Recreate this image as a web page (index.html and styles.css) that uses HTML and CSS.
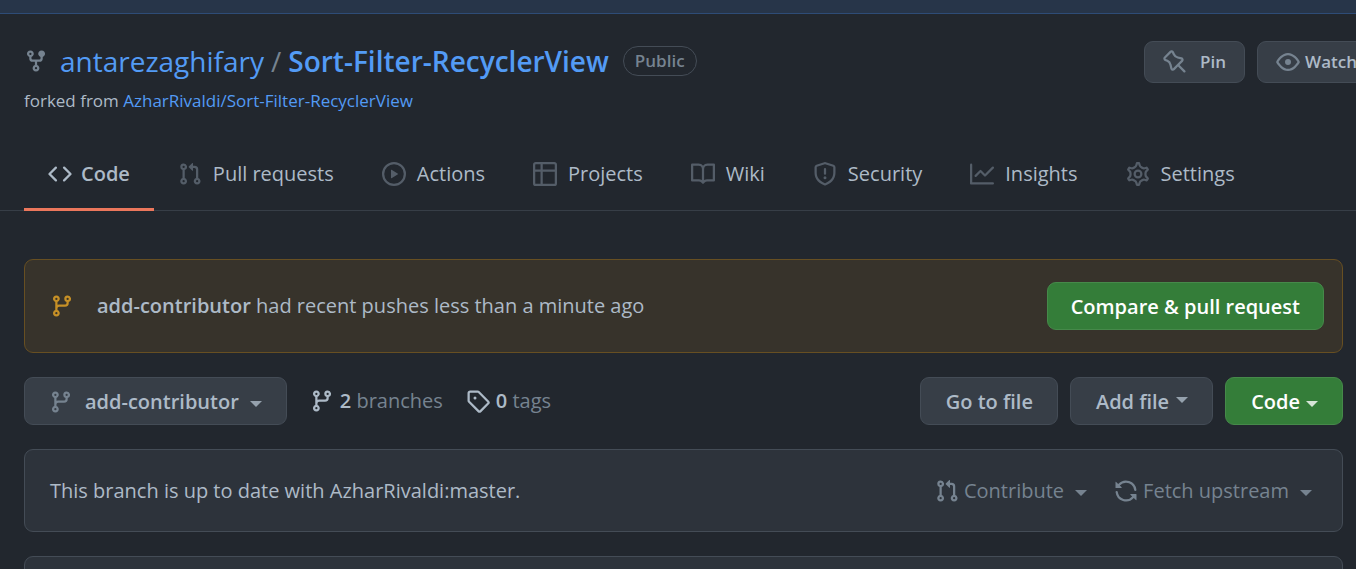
FILE: index.html
```
<!DOCTYPE html>
<html lang="en">
<head>
<meta charset="utf-8">
<title>antarezaghifary/Sort-Filter-RecyclerView</title>
<link rel="stylesheet" href="styles.css">
</head>
<body>
<svg class="sprite" aria-hidden="true">
  <symbol id="fork" viewBox="0 0 16 16"><path d="M5 3.25a.75.75 0 11-1.5 0 .75.75 0 011.5 0zm0 2.122a2.25 2.25 0 10-1.5 0v.878A2.25 2.25 0 005.75 8.5h1.5v2.128a2.251 2.251 0 101.5 0V8.5h1.5a2.25 2.25 0 002.25-2.25v-.878a2.25 2.25 0 10-1.5 0v.878a.75.75 0 01-.75.75h-4.5A.75.75 0 015 6.25v-.878zm3.75 7.378a.75.75 0 11-1.5 0 .75.75 0 011.5 0zm3-8.75a.75.75 0 100-1.5.75.75 0 000 1.5z"/></symbol>
  <symbol id="pin" viewBox="0 0 16 16"><path d="M4.456.734a1.75 1.75 0 012.826.504l.613 1.327a3.081 3.081 0 002.084 1.707l2.454.584c1.332.317 1.8 1.972.832 2.94L11.06 10l3.72 3.72a.75.75 0 11-1.061 1.06L10 11.06l-2.204 2.205c-.968.968-2.623.5-2.94-.832l-.584-2.454a3.081 3.081 0 00-1.707-2.084l-1.327-.613a1.75 1.75 0 01-.504-2.826L4.456.734zM5.92 1.866a.25.25 0 00-.404-.072L1.794 5.516a.25.25 0 00.072.404l1.328.613A4.582 4.582 0 015.73 9.63l.584 2.454a.25.25 0 00.42.12l5.47-5.47a.25.25 0 00-.12-.42L9.63 5.73a4.581 4.581 0 01-3.098-2.537L5.92 1.866z"/></symbol>
  <symbol id="eye" viewBox="0 0 16 16"><path d="M1.679 7.932c.412-.621 1.242-1.75 2.366-2.717C5.175 4.242 6.527 3.5 8 3.5c1.473 0 2.824.742 3.955 1.715 1.124.967 1.954 2.096 2.366 2.717a.119.119 0 010 .136c-.412.621-1.242 1.75-2.366 2.717C10.825 11.758 9.473 12.5 8 12.5c-1.473 0-2.824-.742-3.955-1.715C2.92 9.818 2.09 8.69 1.679 8.068a.119.119 0 010-.136zM8 2c-1.981 0-3.67.992-4.933 2.078C1.797 5.169.88 6.423.43 7.1a1.619 1.619 0 000 1.798c.45.678 1.367 1.932 2.637 3.024C4.329 13.008 6.019 14 8 14c1.981 0 3.67-.992 4.933-2.078 1.27-1.091 2.187-2.345 2.637-3.023a1.619 1.619 0 000-1.798c-.45-.678-1.367-1.932-2.637-3.023C11.671 2.992 9.981 2 8 2zm0 8a2 2 0 100-4 2 2 0 000 4z"/></symbol>
  <symbol id="code" viewBox="0 0 16 16"><path d="M4.72 3.22a.75.75 0 011.06 1.06L2.06 8l3.72 3.72a.75.75 0 11-1.06 1.06L.47 8.53a.75.75 0 010-1.06l4.25-4.25zm6.56 0a.75.75 0 10-1.06 1.06L13.94 8l-3.72 3.72a.75.75 0 101.06 1.06l4.25-4.25a.75.75 0 000-1.06l-4.25-4.25z"/></symbol>
  <symbol id="pull" viewBox="0 0 16 16"><path d="M7.177 3.073L9.573.677A.25.25 0 0110 .854v4.792a.25.25 0 01-.427.177L7.177 3.427a.25.25 0 010-.354zM3.75 2.5a.75.75 0 100 1.5.75.75 0 000-1.5zm-2.25.75a2.25 2.25 0 113 2.122v5.256a2.251 2.251 0 11-1.5 0V5.372A2.25 2.25 0 011.5 3.25zM11 2.5h-1V4h1a1 1 0 011 1v5.628a2.251 2.251 0 101.5 0V5A2.5 2.5 0 0011 2.5zm1 10.25a.75.75 0 111.5 0 .75.75 0 01-1.5 0zM3.75 12a.75.75 0 100 1.5.75.75 0 000-1.5z"/></symbol>
  <symbol id="play" viewBox="0 0 16 16"><path d="M1.5 8a6.5 6.5 0 1113 0 6.5 6.5 0 01-13 0zM8 0a8 8 0 100 16A8 8 0 008 0zM6.379 5.227A.25.25 0 006 5.442v5.117a.25.25 0 00.379.214l4.264-2.559a.25.25 0 000-.428L6.379 5.227z"/></symbol>
  <symbol id="table" viewBox="0 0 16 16"><path fill-rule="evenodd" d="M0 1.75C0 .784.784 0 1.75 0h12.5C15.216 0 16 .784 16 1.75v12.5A1.75 1.75 0 0114.25 16H1.75A1.75 1.75 0 010 14.25V1.75zM1.5 6.5v7.75c0 .138.112.25.25.25H5v-8H1.5zM5 5H1.5V1.75a.25.25 0 01.25-.25H5V5zm1.5 1.5v8h7.75a.25.25 0 00.25-.25V6.5h-8zm8-1.5h-8V1.5h7.75a.25.25 0 01.25.25V5z"/></symbol>
  <symbol id="book" viewBox="0 0 16 16"><path fill-rule="evenodd" d="M0 1.75A.75.75 0 01.75 1h4.253c1.227 0 2.317.59 3 1.501A3.744 3.744 0 0111.006 1h4.245a.75.75 0 01.75.75v10.5a.75.75 0 01-.75.75h-4.507a2.25 2.25 0 00-1.591.659l-.622.621a.75.75 0 01-1.06 0l-.622-.621A2.25 2.25 0 005.258 13H.75a.75.75 0 01-.75-.75V1.75zm8.755 3a2.25 2.25 0 012.25-2.25H14.5v9h-3.757c-.71 0-1.4.201-1.992.572l.004-7.322zm-1.504 7.324l.004-5.073-.002-2.253A2.25 2.25 0 005.003 2.5H1.5v9h3.757a3.75 3.75 0 011.994.574z"/></symbol>
  <symbol id="shield" viewBox="0 0 16 16"><path fill-rule="evenodd" d="M7.467.133a1.75 1.75 0 011.066 0l5.25 1.68A1.75 1.75 0 0115 3.48V7c0 1.566-.32 3.182-1.303 4.682-.983 1.498-2.585 2.813-5.032 3.855a1.7 1.7 0 01-1.33 0c-2.447-1.042-4.049-2.357-5.032-3.855C1.32 10.182 1 8.566 1 7V3.48a1.75 1.75 0 011.217-1.667l5.25-1.68zm.61 1.429a.25.25 0 00-.153 0l-5.25 1.68a.25.25 0 00-.174.238V7c0 1.358.275 2.666 1.057 3.86.784 1.194 2.121 2.34 4.366 3.297a.2.2 0 00.154 0c2.245-.956 3.582-2.104 4.366-3.298C13.225 9.666 13.5 8.36 13.5 7V3.48a.25.25 0 00-.174-.237l-5.25-1.68zM9 10.5a1 1 0 11-2 0 1 1 0 012 0zm-.25-5.75a.75.75 0 10-1.5 0v3a.75.75 0 001.5 0v-3z"/></symbol>
  <symbol id="graph" viewBox="0 0 16 16"><path d="M1.5 1.75a.75.75 0 00-1.5 0v12.5c0 .414.336.75.75.75h14.5a.75.75 0 000-1.5H1.5V1.75zm14.28 2.53a.75.75 0 00-1.06-1.06L10 7.94 7.53 5.47a.75.75 0 00-1.06 0L3.22 8.72a.75.75 0 001.06 1.06L7 7.06l2.47 2.47a.75.75 0 001.06 0l5.25-5.25z"/></symbol>
  <symbol id="gear" viewBox="0 0 16 16"><g fill="none" stroke="currentColor"><path stroke-width="1.35" transform="translate(8 8) scale(1.11) translate(-8 -8)" d="M7.429 1.525a6.593 6.593 0 011.142 0c.036.003.108.036.137.146l.289 1.105c.147.56.55.967.997 1.189.174.086.341.183.501.29.417.278.97.423 1.53.27l1.102-.303c.11-.03.175.016.195.046.219.31.41.641.573.989.014.031.022.11-.059.19l-.815.806c-.411.406-.562.957-.53 1.456a4.588 4.588 0 010 .582c-.032.499.119 1.05.53 1.456l.815.806c.08.08.073.159.059.19a6.494 6.494 0 01-.573.99c-.02.029-.086.074-.195.045l-1.103-.303c-.559-.153-1.112-.008-1.529.27-.16.107-.327.204-.5.29-.449.222-.851.628-.998 1.189l-.289 1.105c-.029.11-.101.143-.137.146a6.613 6.613 0 01-1.142 0c-.036-.003-.108-.037-.137-.146l-.289-1.105c-.147-.56-.55-.967-.997-1.189a4.502 4.502 0 01-.501-.29c-.417-.278-.97-.423-1.53-.27l-1.102.303c-.11.03-.175-.016-.195-.046a6.492 6.492 0 01-.573-.989c-.014-.031-.022-.11.059-.19l.815-.806c.411-.406.562-.957.53-1.456a4.587 4.587 0 010-.582c.032-.499-.119-1.05-.53-1.456l-.815-.806c-.08-.08-.073-.159-.059-.19a6.44 6.44 0 01.573-.99c.02-.029.086-.075.195-.045l1.103.303c.559.153 1.112.008 1.529-.27.16-.107.327-.204.5-.29.449-.222.851-.628.998-1.189l.289-1.105c.029-.11.101-.143.137-.146z"/><circle cx="8" cy="8" r="2.25" stroke-width="1.5"/></g></symbol>
  <symbol id="branch" viewBox="0 0 16 16"><path fill-rule="evenodd" d="M11.75 2.5a.75.75 0 100 1.5.75.75 0 000-1.5zm-2.25.75a2.25 2.25 0 113 2.122V6A2.5 2.5 0 0110 8.5H6a1 1 0 00-1 1v1.128a2.251 2.251 0 11-1.5 0V5.372a2.25 2.25 0 111.5 0v1.836A2.492 2.492 0 016 7h4a1 1 0 001-1v-.628A2.25 2.25 0 019.5 3.25zM4.25 12a.75.75 0 100 1.5.75.75 0 000-1.5zM3.5 3.25a.75.75 0 111.5 0 .75.75 0 01-1.5 0z"/></symbol>
  <symbol id="tag" viewBox="0 0 16 16"><path fill-rule="evenodd" d="M2.5 7.775V2.75a.25.25 0 01.25-.25h5.025a.25.25 0 01.177.073l6.25 6.25a.25.25 0 010 .354l-5.025 5.025a.25.25 0 01-.354 0l-6.25-6.25a.25.25 0 01-.073-.177zm-1.5 0V2.75C1 1.784 1.784 1 2.75 1h5.025c.464 0 .91.184 1.238.513l6.25 6.25a1.75 1.75 0 010 2.474l-5.026 5.026a1.75 1.75 0 01-2.474 0l-6.25-6.25A1.75 1.75 0 011 7.775zM6 5a1 1 0 100 2 1 1 0 000-2z"/></symbol>
  <symbol id="sync" viewBox="0 0 16 16"><path d="M8 2.5a5.487 5.487 0 00-4.131 1.869l1.204 1.204A.25.25 0 014.896 6H1.25A.25.25 0 011 5.75V2.104a.25.25 0 01.427-.177l1.38 1.38A7.001 7.001 0 0114.95 7.16a.75.75 0 11-1.49.178A5.501 5.501 0 008 2.5zM1.705 8.005a.75.75 0 01.834.656 5.501 5.501 0 009.592 2.97l-1.204-1.204a.25.25 0 01.177-.427h3.646a.25.25 0 01.25.25v3.646a.25.25 0 01-.427.177l-1.38-1.38A7.001 7.001 0 011.05 8.84a.75.75 0 01.656-.834z"/></symbol>
</svg>

<div class="topbar"></div>

<header class="repo-head">
  <div class="repo-id">
    <h1 class="repo-title">
      <svg class="icon muted"><use href="#fork"/></svg>
      <a class="owner" href="#">antarezaghifary</a>
      <span class="slash">/</span>
      <a class="repo" href="#">Sort-Filter-RecyclerView</a>
      <span class="label">Public</span>
    </h1>
    <p class="forked">forked from <a href="#">AzharRivaldi/Sort-Filter-RecyclerView</a></p>
  </div>
  <div class="repo-actions">
    <button class="btn btn-sm btn-pin" type="button"><svg class="icon"><use href="#pin"/></svg>Pin</button>
    <button class="btn btn-sm btn-watch" type="button"><svg class="icon"><use href="#eye"/></svg>Watch</button>
  </div>
</header>

<nav class="tabs" aria-label="Repository">
  <a class="tab selected" href="#" aria-current="page"><svg class="icon"><use href="#code"/></svg>Code</a>
  <a class="tab" href="#"><svg class="icon"><use href="#pull"/></svg>Pull requests</a>
  <a class="tab" href="#"><svg class="icon"><use href="#play"/></svg>Actions</a>
  <a class="tab" href="#"><svg class="icon"><use href="#table"/></svg>Projects</a>
  <a class="tab" href="#"><svg class="icon"><use href="#book"/></svg>Wiki</a>
  <a class="tab" href="#"><svg class="icon"><use href="#shield"/></svg>Security</a>
  <a class="tab" href="#"><svg class="icon"><use href="#graph"/></svg>Insights</a>
  <a class="tab" href="#"><svg class="icon"><use href="#gear"/></svg>Settings</a>
</nav>

<main class="content">
  <section class="flash">
    <svg class="icon"><use href="#branch"/></svg>
    <p class="flash-text"><strong>add-contributor</strong> had recent pushes less than a minute ago</p>
    <button class="btn btn-primary" type="button">Compare &amp; pull request</button>
  </section>

  <section class="file-nav">
    <button class="btn btn-branch" type="button"><svg class="icon"><use href="#branch"/></svg>add-contributor<span class="caret"></span></button>
    <a class="stat" href="#"><svg class="icon"><use href="#branch"/></svg><span><strong>2</strong> branches</span></a>
    <a class="stat" href="#"><svg class="icon"><use href="#tag"/></svg><span><strong>0</strong> tags</span></a>
    <div class="file-actions">
      <button class="btn" type="button">Go to file</button>
      <button class="btn btn-add" type="button">Add file<span class="caret"></span></button>
      <button class="btn btn-primary" type="button">Code<span class="caret"></span></button>
    </div>
  </section>

  <section class="box sync-box">
    <p class="sync-text">This branch is up to date with AzharRivaldi:master.</p>
    <button class="link-btn" type="button"><svg class="icon"><use href="#pull"/></svg>Contribute<span class="caret"></span></button>
    <button class="link-btn" type="button"><svg class="icon"><use href="#sync"/></svg>Fetch upstream<span class="caret"></span></button>
  </section>

  <section class="box files-box"></section>
</main>
</body>
</html>
```

FILE: styles.css
```
* { box-sizing: border-box; }

html, body { height: 100%; }

body {
  margin: 0;
  display: flex;
  flex-direction: column;
  overflow: hidden;
  background: #22272e;
  color: #adbac7;
  font-family: "Open Sans", "Noto Sans", sans-serif;
  font-size: 20px;
  line-height: 30px;
}

a { color: #539bf5; text-decoration: none; }
p, h1 { margin: 0; }
strong { font-weight: 600; }

.sprite { position: absolute; width: 0; height: 0; }
.icon { width: 24px; height: 24px; flex: none; fill: currentColor; }
.muted { color: #768390; }

.topbar {
  flex: none;
  height: 14px;
  background: #273549;
  border-bottom: 1px solid #2e4c77;
}

.repo-head {
  flex: none;
  display: flex;
  justify-content: space-between;
  align-items: flex-start;
  overflow: hidden;
  padding: 24px 0 21px 24px;
}

.repo-title {
  display: flex;
  align-items: center;
  height: 46px;
  font-size: 28px;
  font-weight: 400;
  white-space: nowrap;
}
.owner { margin-left: 12px; }
.slash { margin: 0 7px; color: #768390; }
.repo { font-weight: 600; }
.label {
  margin-left: 14px;
  padding: 0 11px;
  border: 1px solid #444c56;
  border-radius: 15px;
  color: #768390;
  font-size: 17px;
  font-weight: 600;
  line-height: 28px;
}
.forked { font-size: 17px; line-height: 34px; }

.repo-actions {
  display: flex;
  gap: 12px;
  margin: 3px -20px 0 0;
}

.btn {
  display: inline-flex;
  align-items: center;
  flex: none;
  height: 48px;
  padding: 2px 24px 0;
  border: 1px solid #444c56;
  border-radius: 9px;
  background: #373e47;
  color: #adbac7;
  font: inherit;
  font-weight: 600;
  white-space: nowrap;
}
.btn .icon { color: #768390; }
.btn-sm { height: 42px; padding: 0 18px; font-size: 17px; }
.btn-pin .icon { margin-right: 13px; }
.btn-watch .icon { margin-right: 5px; }
.btn-primary { background: #347d39; border-color: #46894a; color: #fff; }
.btn-branch .icon { margin-right: 12px; }
.flash .btn { padding: 2px 23px 0; }
.file-actions .btn { padding: 2px 24px 0 25px; }

.caret {
  width: 0;
  height: 0;
  margin: 3px 0 0 6px;
  border: 6px solid transparent;
  border-top-color: currentColor;
  border-bottom: 0;
  opacity: .8;
}
.btn-branch .caret { margin-left: 11px; }
.btn-add .caret { margin: -5px 0 0 7px; }

.tabs {
  flex: none;
  display: flex;
  padding-left: 24px;
  border-bottom: 1px solid #373e47;
}
.tab {
  display: flex;
  align-items: center;
  gap: 11px;
  height: 72px;
  margin-bottom: -1px;
  padding: 0 24px;
  color: #adbac7;
  border-bottom: 3px solid transparent;
}
.tab .icon { color: #545d68; }
.tab.selected { gap: 9px; border-color: #ec775c; font-weight: 600; }
.tab.selected .icon { color: #adbac7; }

.content {
  flex: 1;
  display: flex;
  flex-direction: column;
  gap: 24px;
  padding: 48px 13px 0 24px;
}

.flash {
  display: flex;
  align-items: center;
  padding: 22px 18px;
  border: 1px solid #674f22;
  border-radius: 9px;
  background: #37332b;
}
.flash .icon { margin: 0 23px 0 7px; color: #c69026; }
.flash-text { flex: 1; }

.file-nav { display: flex; align-items: center; }
.stat {
  display: flex;
  align-items: center;
  gap: 6px;
  margin-left: 23px;
  color: #768390;
}
.stat .icon, .stat strong { color: #adbac7; }
.file-actions { display: flex; gap: 12px; margin-left: auto; }

.box {
  border: 1px solid #444c56;
  border-radius: 9px;
  background: #2d333b;
}
.sync-box {
  display: flex;
  align-items: center;
  gap: 27px;
  padding: 26px 30px 25px 25px;
}
.sync-text { flex: 1; }
.link-btn {
  display: flex;
  align-items: center;
  gap: 5px;
  padding: 0;
  border: 0;
  background: none;
  color: #768390;
  font: inherit;
}
.link-btn .caret { opacity: 1; }
.files-box { flex: 1; margin-bottom: -12px; }
```
